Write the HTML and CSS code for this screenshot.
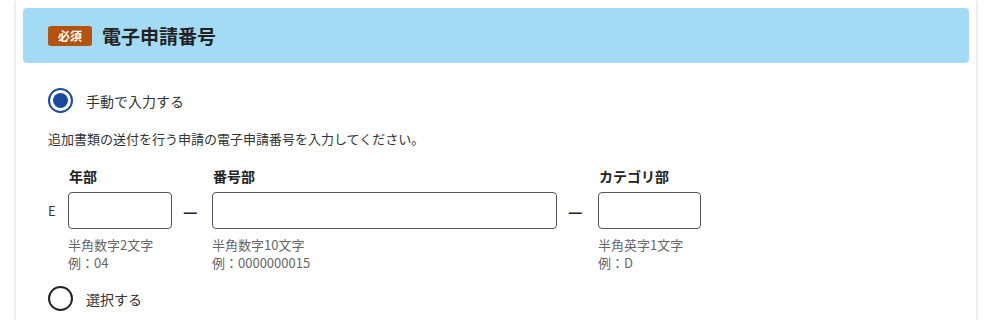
FILE: index.html
```html
<!DOCTYPE html>
<html lang="ja">
<head>
<meta charset="utf-8">
<title>電子申請番号</title>
<link rel="stylesheet" href="styles.css">
</head>
<body>
<div class="card">
  <div class="header">
    <span class="badge">必須</span>
    <h2 class="title">電子申請番号</h2>
  </div>
  <div class="content">
    <label class="radio-row">
      <span class="radio checked"></span>
      <span class="radio-label">手動で入力する</span>
    </label>
    <p class="desc">追加書類の送付を行う申請の電子申請番号を入力してください。</p>
    <div class="fields">
      <div class="lbl c1">年部</div>
      <div class="lbl c2">番号部</div>
      <div class="lbl c3">カテゴリ部</div>
      <div class="prefix">E</div>
      <div class="box w1"></div>
      <div class="dash"><span class="dash-line">—</span></div>
      <div class="box w2"></div>
      <div class="dash"><span class="dash-line">—</span></div>
      <div class="box w3"></div>
      <div class="hint c1">半角数字2文字<br>例：04</div>
      <div class="hint c2">半角数字10文字<br>例：0000000015</div>
      <div class="hint c3">半角英字1文字<br>例：D</div>
    </div>
    <label class="radio-row second">
      <span class="radio"></span>
      <span class="radio-label">選択する</span>
    </label>
  </div>
</div>
</body>
</html>
```
FILE: styles.css
```css
html, body {
  margin: 0;
  padding: 0;
  background: #ffffff;
}
body {
  font-family: "Noto Sans CJK JP", "Noto Sans", sans-serif;
  color: #333333;
}
.card {
  width: 960px;
  height: 330px;
  margin: 0 16px;
  box-sizing: border-box;
  padding: 8px 7px 0 7px;
  background: #ffffff;
  box-shadow: 0 0 3px rgba(0, 0, 0, 0.22);
}
.header {
  height: 55px;
  background: #a3dbf5;
  border-radius: 4px;
  display: flex;
  align-items: center;
  padding-left: 25px;
  gap: 10px;
}
.badge {
  display: inline-block;
  width: 44px;
  height: 20px;
  line-height: 20px;
  text-align: center;
  background: #b5520b;
  color: #ffffff;
  font-size: 12px;
  font-weight: 700;
  border-radius: 3px;
}
.title {
  margin: 0;
  font-size: 19px;
  font-weight: 700;
  color: #222222;
  line-height: 24px;
}
.content {
  padding: 25px 0 0 25px;
}
.radio-row {
  display: flex;
  align-items: center;
  height: 25px;
  gap: 13px;
}
.radio {
  width: 25px;
  height: 25px;
  box-sizing: border-box;
  border: 2px solid #222222;
  border-radius: 50%;
  display: flex;
  align-items: center;
  justify-content: center;
}
.radio.checked {
  border-color: #1a4a9e;
}
.radio.checked::after {
  content: "";
  width: 15px;
  height: 15px;
  border-radius: 50%;
  background: #1a4a9e;
}
.radio-label {
  font-size: 14px;
  color: #333333;
}
.desc {
  margin: 16px 0 0 0;
  font-size: 13px;
  line-height: 20px;
  color: #333333;
}
.fields {
  margin-top: 17px;
  display: grid;
  grid-template-columns: 20px 104px 40px 345px 41px 103px;
  grid-template-rows: 20px 43px auto;
  row-gap: 0;
}
.lbl {
  grid-row: 1;
  font-size: 14px;
  font-weight: 700;
  line-height: 20px;
  color: #222222;
  padding-left: 1px;
}
.c1 { grid-column: 2; }
.c2 { grid-column: 4; }
.c3 { grid-column: 6; }
.prefix {
  grid-row: 2;
  grid-column: 1;
  margin-top: 6px;
  font-size: 13px;
  line-height: 37px;
  color: #333333;
}
.box {
  grid-row: 2;
  margin-top: 6px;
  height: 37px;
  box-sizing: border-box;
  border: 1px solid #555555;
  border-radius: 4px;
  background: #ffffff;
}
.w1 { grid-column: 2; }
.w2 { grid-column: 4; }
.w3 { grid-column: 6; }
.dash {
  grid-row: 2;
  margin-top: 6px;
  height: 37px;
  display: flex;
  align-items: center;
  padding-left: 11px;
}
.dash-line {
  font-size: 16px;
  font-weight: 700;
  line-height: 16px;
  color: #222222;
}
.hint {
  grid-row: 3;
  margin-top: 7px;
  font-size: 13px;
  line-height: 18px;
  color: #666666;
}
.radio-row.second {
  margin-top: 14px;
}
```
